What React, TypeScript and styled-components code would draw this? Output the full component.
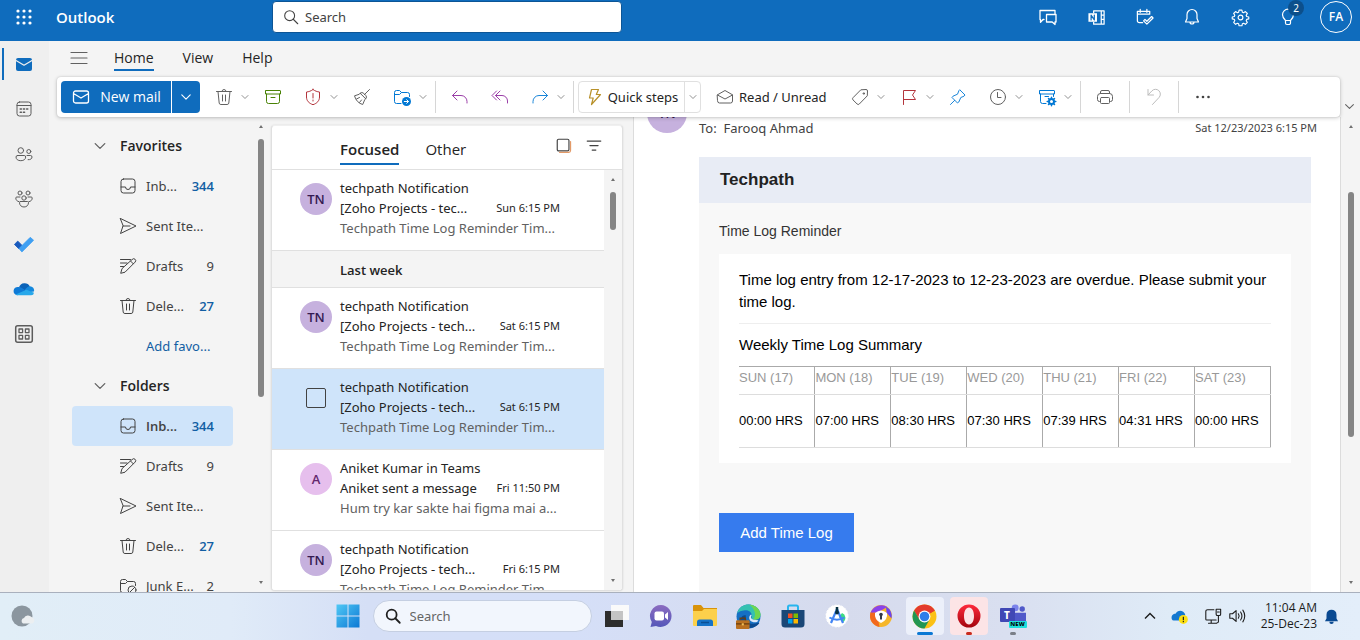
import React from "react";
import styled, { createGlobalStyle, css } from "styled-components";

const UI = `"Noto Sans", "Open Sans", sans-serif`;
const UI_STRONG = `"Open Sans", "Noto Sans", sans-serif`;
const MAIL = `"Liberation Sans", Arial, sans-serif`;

const Global = createGlobalStyle`
  *, *::before, *::after { box-sizing: border-box; }
  html, body { margin: 0; height: 100%; }
  body { background: #f4f4f4; color: #242424; font: 13px/20px ${UI}; overflow: hidden; }
  #root { height: 100%; }
  button { font: inherit; color: inherit; background: none; border: 0; padding: 0; margin: 0; cursor: pointer; }
  input { font: inherit; color: inherit; }
  a { text-decoration: none; color: inherit; }
  ul { list-style: none; margin: 0; padding: 0; }
  h1, h2, h3, p { margin: 0; font-size: inherit; font-weight: inherit; }
`;

const strong = css`font-family: ${UI_STRONG}; font-weight: 600;`;

/* ---------- line icons on a 20-unit grid ---------- */

const ICONS: Record<string, React.ReactNode> = {
  trash: <path d="M2.5 4.5h15M8 4.5a2 2 0 0 1 4 0M4 4.5l1.2 11.6a1.7 1.7 0 0 0 1.7 1.4h6.2a1.7 1.7 0 0 0 1.7-1.4L16 4.5M8.5 8v6M11.5 8v6" />,
  archive: <path d="M3 3.5h14a.5.5 0 0 1 .5.5v3h-15V4a.5.5 0 0 1 .5-.5zM3.500 7v7.500a2 2 0 0 0 2 2h9a2 2 0 0 0 2-2V7M8 10.500h4" />,
  shield: <><path d="M10 2.500c2 1.600 4.300 2.300 6.500 2.500v5c0 3.700-2.400 6.300-6.500 7.700C5.900 16.300 3.500 13.700 3.500 10V5C5.700 4.800 8 4.100 10 2.500z" /><path d="M10 6.500v4.500M10 13v1" /></>,
  broom: <path d="M17.500 2.500l-5.300 5.300M8.200 6.300l5.500 5.500M8.200 6.300l-1 1-4.700 1.500c1 4.300 4.200 7.700 8.200 8.700l2-4.700 1-1a2.500 2.500 0 0 0 0-3.500l-1.900-1.900a2.500 2.500 0 0 0-3.600-.1zM4.500 12l3-1.500M7.500 15.500l2-2.500" />,
  moveFolder: <><path d="M9 16.500H4.500a2 2 0 0 1-2-2v-9a2 2 0 0 1 2-2h3l2 2h6a2 2 0 0 1 2 2v2M2.500 7.500h5l2-2" /><circle cx="14.500" cy="14.500" r="4.500" fill="currentColor" stroke="none" /><path d="M12.300 14.500h4M14.700 12.700l1.800 1.800-1.800 1.800" stroke="#fff" /></>,
  reply: <path d="M7 4L2.500 8.500 7 13M2.500 8.500H11a6 6 0 0 1 6 6V16" />,
  replyAll: <path d="M6.500 4L2 8.500 6.500 13M10 4L5.500 8.500 10 13M5.500 8.500H12a5.500 5.500 0 0 1 5.500 5.500v2" />,
  forward: <path d="M13 4l4.500 4.500L13 13M17.500 8.500H9a6 6 0 0 0-6 6V16" />,
  bolt: <path d="M6.500 2.500h7l-2.200 5h4.200L6.500 17.500l1.700-6.500H4.500z" />,
  openMail: <path d="M2.500 7.800L10 3.500l7.500 4.300V14a2 2 0 0 1-2 2h-11a2 2 0 0 1-2-2zM2.500 8l7.500 4 7.500-4" />,
  tag: <><path d="M11.200 2.800l4.800-.3a1.500 1.500 0 0 1 1.500 1.500l-.2 4.800-8 8.200a1.500 1.500 0 0 1-2.200 0l-4.100-4.100a1.500 1.500 0 0 1 0-2.200z" /><path d="M13.500 6h1v1h-1z" /></>,
  flag: <path d="M4.500 17.500v-14h12l-3 4.500 3 4.500h-12" />,
  pin: <path d="M12 3l5 5-1 1.200-3.200 1.300-2 4.500-1.300 1L4 10.500l1-1.300 4.500-2 1.300-3.200zM6.700 13.300L2.500 17.500" />,
  clock: <><circle cx="10" cy="10" r="7.500" /><path d="M9.500 5.500v5H13" /></>,
  rules: <><path d="M3 3.500h14a.5.500 0 0 1 .5.500v3h-15V4a.5.500 0 0 1 .5-.500zM3.500 7v7.500a2 2 0 0 0 2 2H9M16.500 7v2.500M8 9.500h3.500" /><circle cx="14.500" cy="14.500" r="2.500" strokeWidth="2" /><path d="M14.500 10.200v1.500M14.500 17.300v1.500M10.200 14.500h1.500M17.300 14.500h1.500M11.500 11.500l1 1M16.500 16.500l1 1M11.500 17.500l1-1M16.500 12.500l1-1" strokeWidth="1.500" /></>,
  print: <path d="M5.500 6.500V5a1.500 1.500 0 0 1 1.500-1.500h6A1.500 1.500 0 0 1 14.500 5v1.500M5.500 14.500h-1a2 2 0 0 1-2-2v-3a3 3 0 0 1 3-3h9a3 3 0 0 1 3 3v3a2 2 0 0 1-2 2h-1M6.500 10.500h7a1 1 0 0 1 1 1v4a1 1 0 0 1-1 1h-7a1 1 0 0 1-1-1v-4a1 1 0 0 1 1-1z" />,
  undo: <path d="M4 2.500V8h5.500M4 8l4-4.200a4.800 4.800 0 0 1 7 6.700L8.500 17.500" />,
  more: <g fill="currentColor" stroke="none"><circle cx="4.500" cy="10" r="1.300" /><circle cx="10" cy="10" r="1.300" /><circle cx="15.500" cy="10" r="1.300" /></g>,
  mail: <path d="M4.500 4h11a2 2 0 0 1 2 2v8a2 2 0 0 1-2 2h-11a2 2 0 0 1-2-2V6a2 2 0 0 1 2-2zM2.500 6.500L10 11l7.500-4.500" />,
  mailFilled: <><rect x="2" y="4" width="16" height="13" rx="2" fill="currentColor" stroke="none" /><path d="M2 6.500l8 4.700 8-4.700" stroke="#efefef" strokeWidth="1.300" /></>,
  calendar: <><rect x="3" y="3" width="14" height="14" rx="2.500" /><path d="M3 6.500h14" /><path d="M6.200 10h1.200M9.400 10h1.200M12.600 10h1.200M6.200 13.200h1.200M9.400 13.200h1.200" strokeWidth="1.500" /></>,
  people: <><circle cx="6.800" cy="6.500" r="2.800" /><circle cx="14.800" cy="7.500" r="2" /><path d="M3.500 11.500h6.700a1.500 1.500 0 0 1 1.500 1.500c0 2.200-1.900 3.700-4.900 3.700S2 15.200 2 13a1.500 1.500 0 0 1 1.500-1.500zM13 11.500h3.500A1.500 1.500 0 0 1 18 13c0 1.800-1.600 2.900-3.900 2.700" /></>,
  groups: <><circle cx="6" cy="4" r="2" /><circle cx="14" cy="4" r="2" /><circle cx="10" cy="9" r="2.200" /><path d="M6.500 12.500h7a1 1 0 0 1 1 1c0 2.700-1.800 4.500-4.500 4.500s-4.500-1.800-4.500-4.500a1 1 0 0 1 1-1zM6 8H2.800a1 1 0 0 0-1 1c0 2 1.200 3.300 3.200 3.700M14 8h3.200a1 1 0 0 1 1 1c0 2-1.200 3.300-3.200 3.700" /></>,
  apps: <><rect x="1.700" y="1.700" width="16.600" height="16.600" rx="2" strokeWidth="1.500" /><path d="M5 5h3.600v3.600H5zM11.400 5H15v3.600h-3.600zM5 11.400h3.600V15H5zM11.400 11.400H15V15h-3.600z" strokeWidth="1.300" /></>,
  inbox: <path d="M5.500 3h9A2.500 2.500 0 0 1 17 5.500v9a2.500 2.500 0 0 1-2.500 2.500h-9A2.500 2.500 0 0 1 3 14.500v-9A2.500 2.500 0 0 1 5.500 3zM3 11h4.500a2.500 2.500 0 0 0 5 0H17" />,
  sent: <path d="M2.500 2.500L18 10 2.500 17.500 5 10zM5 10h7" />,
  drafts: <path d="M2.500 3.500h10M2.500 7h6.500M2.500 10.500h3M14.300 3.300a1.900 1.900 0 0 1 2.800 2.800L7 16.200l-4.300 1.100L3.900 13zM12.500 5l2.800 2.800" />,
  junk: <><path d="M8 16.500H4.500a2 2 0 0 1-2-2v-9a2 2 0 0 1 2-2h3l2 2h6a2 2 0 0 1 2 2v2M2.500 7.500h5l2-2" /><circle cx="14" cy="14" r="4" /><path d="M11.300 16.700l5.400-5.400" /></>,
  menu: <path d="M2 4.500h16M2 10h16M2 15.500h16" />,
  search: <><circle cx="8.500" cy="8.500" r="5.500" /><path d="M12.500 12.500l5 5" /></>,
  select: <><rect x="2.500" y="2.500" width="13" height="13" rx="1.500" stroke="#424242" strokeWidth="1.300" /><path d="M17.300 5v10a2 2 0 0 1-2 2H5" stroke="#e39a68" strokeWidth="1.300" /></>,
  filter: <path d="M2.500 4.500h15M5.500 9.500h9M8 14.500h4" strokeWidth="1.400" />,
  chevron: <path d="M4 7l6 6 6-6" strokeWidth="1.600" />,
  chat: <path d="M6 12.500H5l-2.500 2.800V12.500H2V3.500h15v3.500M8.500 7.500h9.500v7.500h-1v2.500L14.200 15H8.500z" strokeWidth="1.300" />,
  onenote: <><path d="M7 5V3h11v14H7v-2M15 3v14M15 7.500h3M15 12h3" strokeWidth="1.300" /><rect x="1.500" y="5.500" width="9" height="9" fill="#fff" stroke="none" /><path d="M4.300 12.500v-5l3.400 5v-5" stroke="#0f6cbd" strokeWidth="1.300" /></>,
  calCheck: <path d="M2.500 6.500h13M5.500 1.500v3M12.500 1.500v3M8 15.500H4.500a2 2 0 0 1-2-2v-10h13v3M9 13.500l1.500-1.500 2 2 5-5 1.500 1.500-6.500 6.500z" strokeWidth="1.300" />,
  bell: <path d="M10 2.500a5 5 0 0 1 5 5v4l1.500 3.500h-13L5 11.500v-4a5 5 0 0 1 5-5zM8 15a2 2 0 0 0 4 0" strokeWidth="1.200" />,
  gear: <><circle cx="10" cy="10" r="2.500" strokeWidth="1.200" /><path d="M8.500 2.300h3l.5 2.200 1.200.5 2-1.200 2 2-1.200 2 .5 1.200 2.200.5v2l-2.200.5-.5 1.300 1.200 1.900-2 2-2-1.200-1.200.5-.5 2.200h-3L8 16.500l-1.200-.5-2 1.200-2-2 1.200-2-.5-1.200-2.200-.5v-2L3.500 9l.5-1.300-1.200-1.900 2-2 2 1.200L8 4.500z" strokeWidth="1.200" /></>,
  bulb: <path d="M7.500 13.500C5.500 11.500 4.500 10 4.500 7.700a5.500 5.500 0 0 1 11 0c0 2.300-1 3.800-3 5.800zM7.500 13.500V16a1.500 1.500 0 0 0 1.500 1.500h2a1.500 1.500 0 0 0 1.500-1.500v-2.500" strokeWidth="1.200" />,
  monitor: <><path d="M11 3H4a2 2 0 0 0-2 2v8.500a1 1 0 0 0 1 1h10.500M8 14.500V18M5 18h9M16 10v6.500a1.500 1.500 0 0 1-1.500 1" strokeWidth="1.200" /><path d="M13.500 2.500h5v5.500a1.500 1.500 0 0 1-1.500 1.500h-2A1.500 1.500 0 0 1 13.500 8zM15 5.500h2" strokeWidth="1.200" /></>,
  speaker: <path d="M2 7.500h3l4-3.500v12l-4-3.500H2zM11.500 7.500q1.800 2.500 0 5M14 5.500q3 4.500 0 9M16.500 3.500q4.200 6.500 0 13" strokeWidth="1.200" />,
};

const Svg = styled.svg`display: block; flex: none; overflow: visible;`;

function Icon({ name, size = 20, color = "currentColor", width = 1 }: { name: string; size?: number; color?: string; width?: number }) {
  return (
    <Svg viewBox="0 0 20 20" width={size} height={size} color={color} fill="none" stroke="currentColor" strokeWidth={width} strokeLinejoin="round" strokeLinecap="round" aria-hidden="true">
      {ICONS[name]}
    </Svg>
  );
}

/* ---------- page frame ---------- */

const Page = styled.div`display: flex; flex-direction: column; height: 100vh;`;
const Body = styled.div`display: flex; flex: 1; min-height: 0;`;
const Workspace = styled.div`display: flex; flex-direction: column; flex: 1; min-width: 0;`;
const Panes = styled.main`display: flex; flex: 1; min-height: 0;`;

/* ---------- header ---------- */

const Header = styled.header`
  display: flex; align-items: flex-start; height: 41px; flex: none;
  background: #0f6cbd; color: #fff;
`;
const HeaderLeft = styled.div`display: flex; align-items: center; width: 272px; height: 34px;`;
const Brand = styled.h1`${strong} font-size: 15px; padding-left: 8px;`;
const HeaderButton = styled.button`
  position: relative; width: 48px; height: 34px;
  display: flex; align-items: center; justify-content: center;
`;
const HeaderIcons = styled.div`display: flex; margin-left: auto;`;
const HeaderSearch = styled.label`
  display: flex; align-items: center; gap: 3px; width: 350px; height: 32px; margin-top: 1px; padding-left: 9px;
  background: #fff; border: 1px solid #0c5596; border-radius: 4px; color: #424242;
  input { border: 0; outline: 0; flex: 1; min-width: 0; background: none; }
  input::placeholder { color: #424242; opacity: 1; }
`;
const Badge = styled.span`
  position: absolute; right: 8px; top: 0; width: 16px; height: 16px; border-radius: 8px;
  background: #0c4f8b; font-size: 10px; line-height: 16px; text-align: center;
`;
const Account = styled.span`
  ${strong}
  display: flex; align-items: center; justify-content: center;
  width: 32px; height: 32px; border: 1px solid #fff; border-radius: 16px; font-size: 12px;
`;

/* ---------- app rail ---------- */

const Rail = styled.nav`
  display: flex; flex-direction: column; width: 49px; flex: none; background: #efefef; color: #5c5c5c;
`;
const RailButton = styled.button<{ $active?: boolean }>`
  display: flex; align-items: center; justify-content: center; height: 45px; padding-right: 1px;
  ${p => p.$active && css`
    color: #0f6cbd;
    background: linear-gradient(#0f6cbd, #0f6cbd) 2px center / 2px 32px no-repeat;
  `}
`;

/* ---------- ribbon ---------- */

const Tabs = styled.nav`display: flex; align-items: stretch; gap: 29px; height: 36px; padding: 0 20px 3px;`;
const MenuButton = styled.button`width: 20px; display: flex; align-items: center; justify-content: center; color: #616161; margin-right: -4px;`;
const Tab = styled.button<{ $active?: boolean }>`
  display: flex; align-items: center; font-size: 14px; font-family: ${UI_STRONG}; font-weight: ${p => (p.$active ? 500 : 400)};
  background: ${p => (p.$active ? "linear-gradient(#0f6cbd, #0f6cbd) left 0 bottom 3px / 100% 2px no-repeat" : "none")};
`;
const RibbonRow = styled.div`display: flex; padding-left: 8px; position: relative; z-index: 1; flex: none;`;
const Ribbon = styled.div`
  display: flex; align-items: center; flex: 1; min-width: 0; height: 40px; padding: 0 4px;
  background: #fff; border-radius: 4px; box-shadow: 0 0 2px rgba(0,0,0,.14), 0 1px 4px rgba(0,0,0,.2);
`;
const RibbonToggle = styled.button`width: 20px; display: flex; align-items: flex-end; justify-content: center; padding: 0 2px 4px 0; color: #616161;`;
const NewMail = styled.div`
  display: flex; height: 32px; margin-right: 4px; color: #fff; font-size: 14px; font-family: ${UI_STRONG}; font-weight: 500;
  button { display: flex; align-items: center; justify-content: center; background: #0f6cbd; }
  button:first-child { width: 110px; gap: 9px; border-radius: 4px 0 0 4px; margin-right: 1px; }
  button:last-child { width: 28px; border-radius: 0 4px 4px 0; }
`;
const Tool = styled.button<{ $split?: boolean }>`
  display: flex; align-items: center; height: 32px; flex: none;
  width: ${p => (p.$split ? 49 : 40)}px; padding-left: 10px; gap: 6px;
`;
const Separator = styled.span`width: 1px; height: 32px; margin: 0 4px; background: #d6d6d6; flex: none;`;
const QuickSteps = styled.div`
  display: flex; height: 32px; width: 123px; flex: none; border: 1px solid #e0e0e0; border-radius: 4px;
  button { display: flex; align-items: center; justify-content: center; gap: 3px; white-space: nowrap; }
  button:first-child { flex: 1; }
  button:last-child { width: 16px; border-left: 1px solid #e0e0e0; }
`;
const TextTool = styled.button`display: flex; align-items: center; gap: 4px; height: 32px; width: 139px; padding-left: 14px; flex: none; white-space: nowrap;`;

/* ---------- scroll bars ---------- */

const Bar = styled.div<{ $width: number }>`
  display: flex; flex-direction: column; align-items: center; width: ${p => p.$width}px; flex: none; padding: 8px 0;
`;
const Arrow = styled.i<{ $down?: boolean }>`
  border: 2px solid transparent;
  ${p => (p.$down ? "border-top: 3px solid #707070; border-bottom: 0;" : "border-bottom: 3px solid #707070; border-top: 0;")}
`;
const Track = styled.div`display: flex; flex-direction: column; flex: 1; width: 6px; padding: 11px 0 3px;`;
const Thumb = styled.div`background: #858585; border-radius: 3px;`;

function ScrollBar({ width, before, thumb, after }: { width: number; before: number; thumb: number; after: number }) {
  return (
    <Bar $width={width} aria-hidden="true">
      <Arrow />
      <Track>
        <div style={{ flexGrow: before }} />
        <Thumb style={{ flexGrow: thumb }} />
        <div style={{ flexGrow: after }} />
      </Track>
      <Arrow $down />
    </Bar>
  );
}

/* ---------- folder pane ---------- */

const FolderPane = styled.aside`display: flex; width: 222px; flex: none;`;
const FolderTree = styled.nav`flex: 1; min-width: 0; overflow: hidden; padding: 9px 17px 0 23px;`;
const FolderHeading = styled.button`
  ${strong}
  display: flex; align-items: center; gap: 12px; width: 100%; height: 40px; padding-left: 20px; font-size: 14px;
  svg { color: #616161; }
`;
const FolderRow = styled.button<{ $selected?: boolean }>`
  display: flex; align-items: center; width: 100%; height: 40px; padding: 0 19px 0 46px; gap: 8px;
  border-radius: 4px; text-align: left; white-space: nowrap;
  color: #424242; background: ${p => (p.$selected ? "#cfe4fa" : "none")};
  ${p => p.$selected && strong}
`;
const Count = styled.span<{ $strong?: boolean }>`
  margin-left: auto; ${p => p.$strong && css`${strong} color: #115ea3;`}
`;
const AddFavorite = styled.a`display: flex; align-items: center; height: 40px; padding-left: 74px; color: #115ea3;`;

type Folder = { icon: string; label: string; count?: number; strong?: boolean; selected?: boolean };
const FAVORITES: Folder[] = [
  { icon: "inbox", label: "Inb...", count: 344, strong: true },
  { icon: "sent", label: "Sent Ite..." },
  { icon: "drafts", label: "Drafts", count: 9 },
  { icon: "trash", label: "Dele...", count: 27, strong: true },
];
const FOLDERS: Folder[] = [
  { icon: "inbox", label: "Inb...", count: 344, strong: true, selected: true },
  { icon: "drafts", label: "Drafts", count: 9 },
  { icon: "sent", label: "Sent Ite..." },
  { icon: "trash", label: "Dele...", count: 27, strong: true },
  { icon: "junk", label: "Junk E...", count: 2 },
];

function FolderItem({ f }: { f: Folder }) {
  return (
    <FolderRow $selected={f.selected}>
      <Icon name={f.icon} />
      {f.label}
      {f.count !== undefined && <Count $strong={f.strong}>{f.count}</Count>}
    </FolderRow>
  );
}

/* ---------- message list ---------- */

const ListPane = styled.section`
  display: flex; flex-direction: column; width: 352px; flex: none; margin: 8px 10px 1px 0;
  background: #fff; border: 1px solid #e0e0e0; border-top-color: #f0f0f0; border-radius: 4px; box-shadow: 0 0 2px rgba(0,0,0,.12); overflow: hidden;
`;
const ListHeader = styled.div`
  display: flex; align-items: center; height: 44px; flex: none; padding: 0 19px 0 68px; border-bottom: 1px solid #e0e0e0; color: #424242;
`;
const ListTab = styled.button<{ $active?: boolean }>`
  height: 30px; margin: 4px 26px 0 0; font-size: 15px; line-height: 28px; color: #242424;
  font-family: ${UI_STRONG}; font-weight: ${p => (p.$active ? 600 : 400)};
  border-bottom: 2px solid ${p => (p.$active ? "#0f6cbd" : "transparent")};
`;
const ListActions = styled.div`
  display: flex; gap: 12px; margin-left: auto; padding-bottom: 4px;
`;
const ListScroll = styled.div`display: flex; flex: 1; min-height: 0; background: #f4f4f4;`;
const Messages = styled.ul`flex: 1; min-width: 0; overflow: hidden;`;
const GroupLabel = styled.li`${strong} height: 37px; padding-left: 68px; line-height: 38px; border-bottom: 1px solid #e0e0e0;`;
const Message = styled.li<{ $selected?: boolean }>`
  display: flex; gap: 8px; height: 81px; padding: 8px 44px 12px 28px; border-bottom: 1px solid #e0e0e0;
  background: ${p => (p.$selected ? "#cfe4fa" : "#fff")};
`;
const Avatar = styled.span<{ $pink?: boolean }>`
  ${strong}
  display: flex; align-items: center; justify-content: center; width: 32px; height: 32px; border-radius: 16px; margin-top: 5px; flex: none;
  background: ${p => (p.$pink ? "#e6bfed" : "#c6b1de")}; color: ${p => (p.$pink ? "#63276d" : "#341a51")};
`;
const Check = styled.input`
  appearance: none; width: 20px; height: 20px; margin: 11px 6px 0; flex: none;
  border: 1px solid #424242; border-radius: 2px;
`;
const MessageText = styled.div`flex: 1; min-width: 0; white-space: nowrap;`;
const SubjectLine = styled.div`
  display: flex; justify-content: space-between;
  time { font-size: 11px; }
`;
const Preview = styled.p`color: #616161;`;

type Mail = { from: string; subject: string; time: string; preview: string; initials: string; selected?: boolean };
const TN = { from: "techpath Notification", subject: "[Zoho Projects - tech...", preview: "Techpath Time Log Reminder Tim...", initials: "TN" };
const RECENT: Mail[] = [{ ...TN, subject: "[Zoho Projects - tec...", time: "Sun 6:15 PM" }];
const LAST_WEEK: Mail[] = [
  { ...TN, time: "Sat 6:15 PM" },
  { ...TN, time: "Sat 6:15 PM", selected: true },
  { from: "Aniket Kumar in Teams", subject: "Aniket sent a message", time: "Fri 11:50 PM", preview: "Hum try kar sakte hai figma mai a...", initials: "A" },
  { ...TN, time: "Fri 6:15 PM" },
];

function MailRow({ m }: { m: Mail }) {
  return (
    <Message $selected={m.selected}>
      {m.selected ? <Check type="checkbox" aria-label="Select message" /> : <Avatar $pink={m.initials === "A"}>{m.initials}</Avatar>}
      <MessageText>
        <div>{m.from}</div>
        <SubjectLine><span>{m.subject}</span><time>{m.time}</time></SubjectLine>
        <Preview>{m.preview}</Preview>
      </MessageText>
    </Message>
  );
}

/* ---------- reading pane ---------- */

const Reading = styled.article`
  flex: 1; min-width: 0; overflow: hidden; padding: 0 23px 0 13px; background: #fff;
  border-left: 1px solid #dcdcdc; border-right: 1px solid #dcdcdc;
`;
const Envelope = styled.header`display: flex; height: 40px; overflow: hidden; color: #424242;`;
const Sender = styled.span`
  ${strong}
  align-self: flex-end; display: flex; align-items: center; justify-content: center; flex: none;
  width: 40px; height: 40px; margin: 0 12px 24px 0; border-radius: 20px; background: #c6b1de; color: #341a51;
`;
const Recipient = styled.p`padding-top: 1px;`;
const SentAt = styled.time`padding-top: 1px; margin-left: auto; font-size: 11px;`;
const Card = styled.div`margin: 0 6px 0 52px; min-height: 100%; background: #f8f8f8; font-family: ${MAIL}; color: #000;`;
const CardTitle = styled.h2`height: 46px; padding-left: 21px; background: #e8ecf5; color: #222; font-size: 17px; font-weight: 700; line-height: 46px;`;
const CardBody = styled.div`padding: 18px 20px;`;
const Lead = styled.p`font-size: 14px; margin-bottom: 13px; color: #333;`;
const Sheet = styled.div`background: #fff; padding: 15px 20px; font-size: 15px; line-height: 22px;`;
const Notice = styled.p`padding-bottom: 10px; margin-bottom: 10px; border-bottom: 1px solid #eee;`;
const Hours = styled.table`
  width: 100%; margin-top: 10px; border-collapse: collapse; table-layout: fixed; font-size: 13px; line-height: 22px;
  th, td { padding: 0; text-align: left; white-space: nowrap; border-bottom: 1px solid #ddd; border-right: 1px solid #aaa; }
  th { height: 28px; border-top: 1px solid #aaa; color: #999; font-weight: 400; vertical-align: top; }
  td { height: 53px; }
`;
const AddLog = styled.button`
  margin-top: 50px; width: 135px; height: 39px; background: #367bee; color: #fff; font-size: 15px;
`;
const DAYS = [["SUN (17)", "00:00"], ["MON (18)", "07:00"], ["TUE (19)", "08:30"], ["WED (20)", "07:30"], ["THU (21)", "07:39"], ["FRI (22)", "04:31"], ["SAT (23)", "00:00"]];

/* ---------- taskbar ---------- */

const Taskbar = styled.footer`
  display: grid; grid-template-columns: 1fr auto 1fr; align-items: center; height: 48px; flex: none; border-top: 1px solid #a9b0bd; padding-bottom: 1px;
  background: linear-gradient(90deg, #e1eef7 0, #e0ebf8 17%, #d5dff6 27%, #d5dff8 42%, #d6dbed 62%, #d9dff0 74%, #dfebf7 86%, #e3eefa 100%);
`;
const Weather = styled.button`margin-left: 11px; width: 24px;`;
const Apps = styled.div`display: flex; align-items: center;`;
const AppButton = styled.button<{ $tint?: string; $mark?: string; $wide?: boolean }>`
  position: relative; display: flex; align-items: center; justify-content: center; width: 38px; height: 38px; margin: 0 3px;
  border-radius: 4px; background: ${p => p.$tint || "none"};
  ${p => p.$mark && css`&::after {
    content: ""; position: absolute; bottom: 0; width: ${p.$wide ? 16 : 6}px; height: 3px; border-radius: 2px; background: ${p.$mark};
  }`}
`;
const TaskSearch = styled.label`
  display: flex; align-items: center; gap: 8px; width: 219px; height: 32px; margin: 0 3px; padding-left: 10px;
  border: 1px solid #c5cfe2; border-radius: 16px; background: #f2f6fd; color: #1f1f1f;
  input { border: 0; outline: 0; background: none; width: 100px; padding: 0; }
  input::placeholder { color: #666; opacity: 1; }
`;
const Tray = styled.div`display: flex; align-items: center; justify-content: flex-end; padding-right: 21px; color: #1b1b1b;`;
const TrayGroup = styled.div`display: flex; align-items: center; gap: 6px; margin-right: 15px;`;
const TrayButton = styled.button<{ $space?: boolean }>`display: flex; margin-right: ${p => (p.$space ? 9 : 0)}px;`;
const Clock = styled.div`font-family: ${UI_STRONG}; font-size: 12px; line-height: 16px; text-align: right; margin-right: 7px; white-space: nowrap;`;

const art = (size: number, children: React.ReactNode) => <Svg viewBox="0 0 24 24" width={size} height={size} aria-hidden="true">{children}</Svg>;

const TodoLogo = () => art(20, <>
  <path d="M0.500 12.500l4-4 5.500 5.500-4 4z" fill="#195abd" stroke="#195abd" strokeLinejoin="round" />
  <path d="M6 17.500L19.500 4l4 3.500L9.500 21.500z" fill="#3f9ff2" stroke="#3f9ff2" strokeLinejoin="round" />
</>);
const CloudLogo = ({ size = 20 }: { size?: number }) => art(size, <>
  <path d="M6 10a7 7 0 0 1 13-1l-6 5z" fill="#0a62b8" />
  <path d="M5 9.500a6 6 0 0 1 4 1l6 4-11 5A5 5 0 0 1 5 9.500z" fill="#0f7ad6" />
  <path d="M13 12.500l3-2.500a5 5 0 0 1 8 5l-6 1z" fill="#1488dd" />
  <path d="M2 18.500l13-5.500 9 3.500a3.500 3.500 0 0 1-3.500 3H6a5 5 0 0 1-4-1z" fill="#28a8ea" />
</>);

const LOGOS: Record<string, React.ReactNode> = {
  start: art(24, <>
    <linearGradient id="win" x1="0" y1="0" x2="1" y2="1" gradientUnits="objectBoundingBox"><stop stopColor="#50c8f5" /><stop offset="1" stopColor="#0c78d4" /></linearGradient>
    <path d="M.5.500h11v11H.500zM12.500.500h11v11h-11zM.500 12.500h11v11H.500zM12.500 12.500h11v11h-11z" fill="url(#win)" />
  </>),
  tasks: art(24, <>
    <path d="M0 7h18v16H0z" fill="#2d2d2d" /><path d="M6 1h18v15H6z" fill="#fafafa" /><path d="M6 7h12v9H6z" fill="#c4c4c4" />
  </>),
  meet: art(24, <>
    <linearGradient id="meet" x1="0" y1="0" x2="0" y2="1"><stop stopColor="#8b6cc0" /><stop offset="1" stopColor="#5457b9" /></linearGradient>
    <path d="M12 1a11 11 0 1 1-5 21l-5.500 1 1.300-5A11 11 0 0 1 12 1z" fill="url(#meet)" />
    <rect x="5.500" y="7.500" width="9.500" height="9" rx="2" fill="#fff" /><path d="M16 10.500l3-2.500v8l-3-2.500z" fill="#fff" />
  </>),
  files: art(24, <>
    <path d="M0 2a1 1 0 0 1 1-1h7l2.500 3H24v8H0z" fill="#d9930a" /><path d="M0 7h9l2-2h13v16a1 1 0 0 1-1 1H1a1 1 0 0 1-1-1z" fill="#fcd04b" />
    <path d="M4 22v-4a2.500 2.500 0 0 1 2.500-2.500h11A2.500 2.500 0 0 1 20 18v4z" fill="#1673c8" /><path d="M8 18.500h8" stroke="#0b4f94" strokeWidth="1.500" />
  </>),
  edge: art(25, <>
    <circle cx="12" cy="12" r="11.500" fill="#1670c4" /><path d="M1 9C3 3 7 .5 12 .5c7 0 11.500 5 11.500 9.500 0 3-2 5-5 5-2.500 0-4-1-3.500-2.500C16 8 12 5.500 8.500 6 5 6.300 2.500 7.500 1 9z" fill="#35c1b1" />
    <path d="M13 .6c6 .4 10.500 5 10.500 9.400 0 3-2 5-5 5l-2-.5C20 11 18 4 13 .6z" fill="#6fd64f" /><path d="M9.500 11c-1 6 4 10 12 7 1-.5 1 .5.500 1-5 6-15 5-17-2-1-4 1.500-7 4.500-6z" fill="#0c4a8f" /><path d="M15 11c-2 2.500.5 4.500 6.500 4.500-1 2.500-4 2.500-6 1.500-3-1-4-5-1-7z" fill="#dce8f8" />
    <rect x="0" y="15.500" width="13" height="8.500" rx="1" fill="#b9701f" /><path d="M4 15.500v-2h5v2M0 19h13" stroke="#6b3c0d" fill="none" strokeWidth="1.200" /><path d="M5.500 18.500h2v2h-2z" fill="#f4c056" />
  </>),
  store: art(24, <>
    <path d="M7 6V3a1.500 1.500 0 0 1 1.500-1.500h7A1.500 1.500 0 0 1 17 3v3" fill="none" stroke="#28b5ee" strokeWidth="2" />
    <path d="M.5 6h23v14a3.500 3.500 0 0 1-3.500 3.500H4A3.500 3.500 0 0 1 .500 20z" fill="#1a4777" />
    <path d="M7 9.500h4.500V14H7z" fill="#f25022" /><path d="M12.500 9.500H17V14h-4.500z" fill="#7fba00" /><path d="M7 15h4.500v4.500H7z" fill="#00a4ef" /><path d="M12.500 15H17v4.500h-4.500z" fill="#ffb900" />
  </>),
  studio: art(24, <>
    <circle cx="12" cy="12" r="11" fill="#fff" stroke="#fff" strokeDasharray="2 1.500" /><path d="M14 13l3-4a5 5 0 0 1 1 9z" fill="#3ddc84" />
    <path d="M6 19l5.500-13h1L18 19" fill="none" stroke="#4285f4" strokeWidth="2.200" /><path d="M4.500 13.500q7.500 4.500 15 0" stroke="#4285f4" strokeWidth="2" fill="none" /><path d="M12 3v5" stroke="#073042" strokeWidth="2.500" /><circle cx="12" cy="8.500" r="2" fill="#073042" />
  </>),
  lock: art(24, <>
    <circle cx="12" cy="12" r="11" fill="#f5b62a" /><path d="M1.500 9A11 11 0 0 1 18 3L9 8.500z" fill="#8a43ea" /><path d="M17 2.500a11 11 0 0 1 5.500 12l-5-6z" fill="#6b45f0" /><path d="M1.500 8.500c-2 7 2 13 9 14.500L8 9z" fill="#f2691e" />
    <path d="M6 9q6-5 12 0 1 7-6 10-7-3-6-10z" fill="#fff" /><circle cx="12" cy="10.500" r="1.800" fill="#333a48" /><path d="M11 11h2v4.500h-2z" fill="#333a48" />
  </>),
  chrome: art(25, <>
    <circle cx="12" cy="12" r="11.500" fill="#fbc116" /><path d="M12 12L2 6.300a11.500 11.500 0 0 1 20 0z" fill="#e33b2e" /><path d="M2 6.300h20L17 9 7 15z" fill="#e33b2e" />
    <path d="M2 6.300A11.500 11.500 0 0 0 12 23.500l5-8.800-10 0z" fill="#219653" /><circle cx="12" cy="12" r="5.700" fill="#fff" /><circle cx="12" cy="12" r="4.600" fill="#2f7de9" />
  </>),
  opera: art(24, <>
    <linearGradient id="opera" x1="0" y1="0" x2="0" y2="1"><stop stopColor="#ff2a3c" /><stop offset="1" stopColor="#a3040d" /></linearGradient>
    <path fillRule="evenodd" d="M12 .500a11.500 11.500 0 1 1 0 23 11.500 11.500 0 0 1 0-23zm0 3c-3.200 0-5 4-5 8.500s1.800 8.500 5 8.500 5-4 5-8.500-1.800-8.500-5-8.500z" fill="url(#opera)" />
  </>),
};

const TeamsBadge = styled.span`
  position: absolute; right: 5px; bottom: 7px; width: 18px; height: 7px; background: #1de0dc; color: #000;
  font-size: 6px; font-weight: 800; line-height: 7px; text-align: center; border-radius: 1px;
`;
const TeamsTile = styled.span`
  position: absolute; left: 6px; top: 11px; width: 15px; height: 14px; background: #4048b5; color: #fff;
  font-size: 10px; font-weight: 800; line-height: 14px; text-align: center; border-radius: 1px;
`;

function Task() {
  return (
    <Taskbar>
      <Weather aria-label="Weather">
        {art(24, <><circle cx="11" cy="12" r="10.500" fill="#8b969f" /><path d="M12 19.500a3 3 0 0 1 1-5.500 4.500 4.500 0 0 1 7.500-1 3.500 3.500 0 0 1 1 6.500z" fill="#eceff1" /></>)}
      </Weather>
      <Apps>
        <AppButton aria-label="Start">{LOGOS.start}</AppButton>
        <TaskSearch><Icon name="search" size={18} width={2} /><input type="search" placeholder="Search" aria-label="Search this computer" /></TaskSearch>
        <AppButton aria-label="Task view">{LOGOS.tasks}</AppButton>
        <AppButton aria-label="Chat">{LOGOS.meet}</AppButton>
        <AppButton aria-label="File Explorer">{LOGOS.files}</AppButton>
        <AppButton aria-label="Edge">{LOGOS.edge}</AppButton>
        <AppButton aria-label="Store">{LOGOS.store}</AppButton>
        <AppButton aria-label="Android Studio">{LOGOS.studio}</AppButton>
        <AppButton aria-label="Secure browser">{LOGOS.lock}</AppButton>
        <AppButton aria-label="Chrome" $tint="#ecf0fa" $mark="#0b78d4" $wide>{LOGOS.chrome}</AppButton>
        <AppButton aria-label="Opera" $tint="#fce4e6" $mark="#c92a1c">{LOGOS.opera}</AppButton>
        <AppButton aria-label="Teams" $mark="#7b7f88">
          {art(26, <><circle cx="14" cy="4.500" r="3.200" fill="#7b83eb" /><circle cx="20.500" cy="5.500" r="2.500" fill="#5059c9" /><path d="M9 9h15v8H9z" fill="#5059c9" /></>)}
          <TeamsTile>T</TeamsTile>
          <TeamsBadge>NEW</TeamsBadge>
        </AppButton>
      </Apps>
      <Tray>
        <TrayGroup>
          <TrayButton $space aria-label="Show hidden icons">
            <Svg viewBox="0 0 12 12" width="12" height="12" fill="none" stroke="currentColor" strokeWidth="1.400"><path d="M1 8.500l5-5 5 5" /></Svg>
          </TrayButton>
          <TrayButton $space aria-label="OneDrive">
            {art(18, <><path d="M1 16c-1-5 2-7 5-7 3-6 11-5 13 1l-4 8H4a3 3 0 0 1-3-2z" fill="#1478d0" /><circle cx="16.500" cy="16.500" r="6" fill="#fde010" /><path d="M16.500 13v4.500M16.500 18.800v1.500" stroke="#222" strokeWidth="1.600" /></>)}
          </TrayButton>
          <TrayButton aria-label="Network"><Icon name="monitor" size={18} /></TrayButton>
          <TrayButton aria-label="Volume"><Icon name="speaker" size={18} /></TrayButton>
        </TrayGroup>
        <Clock><div>11:04 AM</div><div>25-Dec-23</div></Clock>
        <TrayButton aria-label="Notifications">
          {art(15, <><path d="M12 1a8 8 0 0 1 8 8v6l2.500 4.500h-21L4 15V9a8 8 0 0 1 8-8zM8.500 20.500h7a3.500 3.500 0 0 1-7 0z" fill="#0a4a92" /></>)}
        </TrayButton>
      </Tray>
    </Taskbar>
  );
}

const SplitTool = ({ icon, color, label }: { icon: string; color: string; label: string }) => (
  <Tool $split aria-label={label}><Icon name={icon} color={color} /><Icon name="chevron" size={10} color="#757575" /></Tool>
);
const SingleTool = ({ icon, color, label }: { icon: string; color: string; label: string }) => (
  <Tool aria-label={label}><Icon name={icon} color={color} /></Tool>
);

export default function App() {
  return (
    <Page>
      <Global />
      <Header>
        <HeaderLeft>
          <HeaderButton aria-label="App launcher">
            <Svg viewBox="0 0 16 16" width="16" height="16" fill="currentColor">
              {[2, 8, 14].map(y => [2, 8, 14].map(x => <circle key={`${x}-${y}`} cx={x} cy={y} r="1.600" />))}
            </Svg>
          </HeaderButton>
          <Brand>Outlook</Brand>
        </HeaderLeft>
        <HeaderSearch><Icon name="search" size={18} width={1.2} /><input type="search" placeholder="Search" aria-label="Search mail" /></HeaderSearch>
        <HeaderIcons>
          <HeaderButton aria-label="Teams chat"><Icon name="chat" /></HeaderButton>
          <HeaderButton aria-label="OneNote"><Icon name="onenote" size={19} /></HeaderButton>
          <HeaderButton aria-label="My Day"><Icon name="calCheck" size={19} /></HeaderButton>
          <HeaderButton aria-label="Notifications"><Icon name="bell" /></HeaderButton>
          <HeaderButton aria-label="Settings"><Icon name="gear" size={19} /></HeaderButton>
          <HeaderButton aria-label="Tips"><Icon name="bulb" /><Badge>2</Badge></HeaderButton>
          <HeaderButton aria-label="Account"><Account>FA</Account></HeaderButton>
        </HeaderIcons>
      </Header>
      <Body>
        <Rail>
          <RailButton $active aria-label="Mail"><Icon name="mailFilled" /></RailButton>
          <RailButton aria-label="Calendar"><Icon name="calendar" /></RailButton>
          <RailButton aria-label="People"><Icon name="people" /></RailButton>
          <RailButton aria-label="Groups"><Icon name="groups" /></RailButton>
          <RailButton aria-label="To Do"><TodoLogo /></RailButton>
          <RailButton aria-label="OneDrive"><CloudLogo /></RailButton>
          <RailButton aria-label="More apps"><Icon name="apps" /></RailButton>
        </Rail>
        <Workspace>
          <Tabs>
            <MenuButton aria-label="Toggle navigation"><Icon name="menu" width={1.2} /></MenuButton>
            <Tab $active>Home</Tab>
            <Tab>View</Tab>
            <Tab>Help</Tab>
          </Tabs>
          <RibbonRow>
            <Ribbon>
              <NewMail>
                <button><Icon name="mail" width={1.3} />New mail</button>
                <button aria-label="New mail options"><Icon name="chevron" size={14} /></button>
              </NewMail>
              <SplitTool icon="trash" color="#616161" label="Delete" />
              <SingleTool icon="archive" color="#498205" label="Archive" />
              <SplitTool icon="shield" color="#b3343c" label="Report" />
              <SingleTool icon="broom" color="#616161" label="Sweep" />
              <SplitTool icon="moveFolder" color="#0078d4" label="Move to" />
              <Separator />
              <SingleTool icon="reply" color="#9b3fa8" label="Reply" />
              <SingleTool icon="replyAll" color="#9b3fa8" label="Reply all" />
              <SplitTool icon="forward" color="#1a86d9" label="Forward" />
              <Separator />
              <QuickSteps>
                <button><Icon name="bolt" color="#b8912a" width={1.2} />Quick steps</button>
                <button aria-label="Quick steps options"><Icon name="chevron" size={10} color="#757575" /></button>
              </QuickSteps>
              <TextTool><Icon name="openMail" color="#616161" />Read / Unread</TextTool>
              <SplitTool icon="tag" color="#616161" label="Categorize" />
              <SplitTool icon="flag" color="#b3343c" label="Flag" />
              <SingleTool icon="pin" color="#1a86d9" label="Pin" />
              <SplitTool icon="clock" color="#616161" label="Snooze" />
              <SplitTool icon="rules" color="#0078d4" label="Rules" />
              <Separator />
              <SingleTool icon="print" color="#616161" label="Print" />
              <Separator />
              <SingleTool icon="undo" color="#bdbdbd" label="Undo" />
              <Separator />
              <SingleTool icon="more" color="#424242" label="More" />
            </Ribbon>
            <RibbonToggle aria-label="Ribbon options"><Icon name="chevron" size={13} /></RibbonToggle>
          </RibbonRow>
          <Panes>
            <FolderPane>
              <FolderTree>
                <FolderHeading><Icon name="chevron" size={16} />Favorites</FolderHeading>
                {FAVORITES.map(f => <FolderItem key={f.label} f={f} />)}
                <AddFavorite href="#">Add favo...</AddFavorite>
                <FolderHeading><Icon name="chevron" size={16} />Folders</FolderHeading>
                {FOLDERS.map(f => <FolderItem key={f.label} f={f} />)}
              </FolderTree>
              <ScrollBar width={21} before={0} thumb={257} after={180} />
            </FolderPane>
            <ListPane>
              <ListHeader>
                <ListTab $active>Focused</ListTab>
                <ListTab>Other</ListTab>
                <ListActions>
                  <button aria-label="Select"><Icon name="select" size={18} /></button>
                  <button aria-label="Filter"><Icon name="filter" size={18} /></button>
                </ListActions>
              </ListHeader>
              <ListScroll>
                <Messages>
                  {RECENT.map((m, i) => <MailRow key={i} m={m} />)}
                  <GroupLabel>Last week</GroupLabel>
                  {LAST_WEEK.map((m, i) => <MailRow key={i} m={m} />)}
                </Messages>
                <ScrollBar width={18} before={0} thumb={38} after={346} />
              </ListScroll>
            </ListPane>
            <Reading>
              <Envelope>
                <Sender>TN</Sender>
                <Recipient>To:&nbsp; Farooq Ahmad</Recipient>
                <SentAt>Sat 12/23/2023 6:15 PM</SentAt>
              </Envelope>
              <Card>
                <CardTitle>Techpath</CardTitle>
                <CardBody>
                  <Lead>Time Log Reminder</Lead>
                  <Sheet>
                    <Notice>Time log entry from 12-17-2023 to 12-23-2023 are overdue. Please submit your time log.</Notice>
                    <p>Weekly Time Log Summary</p>
                    <Hours>
                      <thead><tr>{DAYS.map(d => <th key={d[0]} scope="col">{d[0]}</th>)}</tr></thead>
                      <tbody><tr>{DAYS.map(d => <td key={d[0]}>{d[1]} HRS</td>)}</tr></tbody>
                    </Hours>
                  </Sheet>
                  <AddLog>Add Time Log</AddLog>
                </CardBody>
              </Card>
            </Reading>
            <ScrollBar width={19} before={53} thumb={244} after={140} />
          </Panes>
        </Workspace>
      </Body>
      <Task />
    </Page>
  );
}
